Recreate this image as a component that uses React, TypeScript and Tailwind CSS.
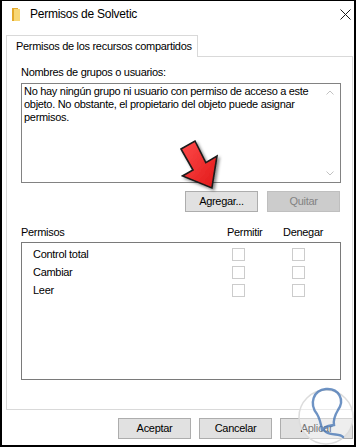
import React from 'react';

const FONT = { fontFamily: '"Liberation Sans", Arial, sans-serif' };

function FolderIcon() {
  return (
    <svg width="8" height="13" viewBox="0 0 8 13">
      <rect x="0" y="0" width="6" height="13" fill="#e3a92b" />
      <rect x="2" y="1" width="6" height="12" fill="#f8d775" />
    </svg>
  );
}

function WinButton({ label, disabled }: { label: string; disabled?: boolean }) {
  return (
    <div
      className={
        'w-[73px] h-[21px] flex items-center justify-center text-[11px] tracking-[-0.3px] border ' +
        (disabled ? 'bg-[#cccccc] border-[#bfbfbf] text-[#838383]' : 'bg-[#e1e1e1] border-[#adadad] text-black')
      }
    >
      {label}
    </div>
  );
}

function Check() {
  return <div className="w-[13px] h-[13px] border border-[#cccccc] bg-white" />;
}

const rows = ['Control total', 'Cambiar', 'Leer'];

export default function App() {
  return (
    <div
      className="relative w-[356px] h-[447px] bg-white border-t border-l-2 border-r-2 border-b-2 border-black flex flex-col overflow-hidden"
      style={FONT}
    >
      {/* title bar */}
      <div className="h-[26px] flex items-center pl-[10px] pr-[3px]">
        <FolderIcon />
        <span className="ml-[10px] text-[12px] tracking-[-0.25px] text-black flex-1">Permisos de Solvetic</span>
        <svg width="11" height="11" viewBox="0 0 11 11">
          <path d="M0.5 0.5 L10.5 10.5 M10.5 0.5 L0.5 10.5" stroke="#1a1a1a" strokeWidth="1" />
        </svg>
      </div>

      {/* tab */}
      <div className="mt-[8px] ml-[4px] flex">
        <div className="relative z-10 -mb-px h-[22px] w-[192px] bg-white border border-b-0 border-[#d9d9d9] pl-[9px] flex items-center text-[11px] tracking-[-0.3px] text-black">
          Permisos de los recursos compartidos
        </div>
      </div>

      {/* tab page */}
      <div className="ml-[4px] mr-[1px] h-[354px] border border-[#d9d9d9] pl-[14px] pr-[11px] flex flex-col text-[11px] tracking-[-0.3px] text-black">
        <div className="mt-[9px] leading-[13px]">Nombres de grupos o usuarios:</div>
        <div className="relative mt-[4px] h-[100px] border border-[#828282] pl-[2px] pt-[1px] leading-[13px]">
          No hay ningún grupo ni usuario con permiso de acceso a este
          <br />
          objeto. No obstante, el propietario del objeto puede asignar
          <br />
          permisos.
          <svg className="absolute right-[6px] top-[6px]" width="8" height="5" viewBox="0 0 8 5">
            <path d="M0.5 4.5 L4 1 L7.5 4.5" stroke="#c2c2c2" fill="none" />
          </svg>
          <svg className="absolute right-[6px] bottom-[6px]" width="8" height="5" viewBox="0 0 8 5">
            <path d="M0.5 0.5 L4 4 L7.5 0.5" stroke="#c2c2c2" fill="none" />
          </svg>
        </div>

        <div className="mt-[8px] flex justify-end gap-[9px] pr-[1px]">
          <WinButton label="Agregar..." />
          <WinButton label="Quitar" disabled />
        </div>

        <div className="mt-[14px] flex leading-[13px]">
          <span className="w-[206px]">Permisos</span>
          <span className="w-[56px]">Permitir</span>
          <span>Denegar</span>
        </div>

        <div className="mt-[3px] h-[138px] border border-[#7a7a7a] pt-[2px] pl-[11px] flex flex-col">
          {rows.map(r => (
            <div key={r} className="h-[18px] flex items-center">
              <span className="w-[199px]">{r}</span>
              <Check />
              <div className="w-[47px]" />
              <Check />
            </div>
          ))}
        </div>
      </div>

      {/* dialog buttons */}
      <div className="mt-[8px] mr-[1px] flex justify-end gap-[8px]">
        <WinButton label="Aceptar" />
        <WinButton label="Cancelar" />
        <WinButton label="Aplicar" />
      </div>

      {/* overlays: red arrow and watermark */}
      <svg
        className="absolute -left-[2px] -top-[1px] pointer-events-none"
        width="356"
        height="447"
        viewBox="0 0 356 447"
      >
        <defs>
          <linearGradient id="arrowFill" x1="0" y1="0" x2="1" y2="1">
            <stop offset="0" stopColor="#ff4a4a" />
            <stop offset="1" stopColor="#e01818" />
          </linearGradient>
          <filter id="shadow" x="-20%" y="-20%" width="150%" height="150%">
            <feDropShadow dx="2" dy="2" stdDeviation="1.5" floodColor="#000" floodOpacity="0.45" />
          </filter>
        </defs>
        <polygon
          points="181,149 195,141 205.8,162.6 217,156 211.9,188 182.5,176 193,170"
          fill="url(#arrowFill)"
          stroke="#1a1a1a"
          strokeWidth="1.6"
          strokeLinejoin="miter"
          filter="url(#shadow)"
        />

        <circle cx="326" cy="417" r="27" fill="#ffffff" fillOpacity="0.45" stroke="#dcdcdc" strokeWidth="1.5" />
        <path
          d="M317 414 C309 404 313 390 326 389 C339 388 345 400 338 410 C335 415 333 419 334 425 C327 426 320 428 326 432 C332 436 340 433 343 437 M317 414 C320 419 321 424 322 430"
          fill="none"
          stroke="#4a78b5"
          strokeOpacity="0.8"
          strokeWidth="2.4"
          strokeLinecap="round"
        />
      </svg>
    </div>
  );
}
